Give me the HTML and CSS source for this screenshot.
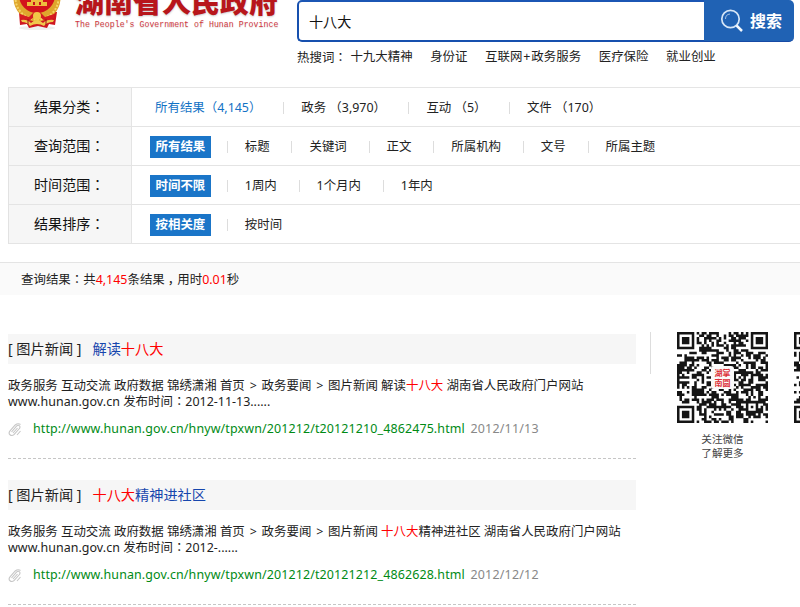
FILE: index.html
```html
<!DOCTYPE html>
<html lang="zh-CN">
<head>
<meta charset="utf-8">
<title>湖南省人民政府 - 搜索</title>
<link rel="stylesheet" href="styles.css">
</head>
<body>
<header class="top">
  <svg class="emblem" viewBox="0 2 52 34" width="52" height="34">
    <ellipse cx="26" cy="30" rx="18" ry="2" fill="#eee"/>
    <path d="M8 14L9 27L16 26L18 30L27 28L36 30L38 26L44 27L46 14Z" fill="#cf1620"/>
    <circle cx="26" cy="0" r="23.500" fill="#dfa62d"/>
    <circle cx="26" cy="0" r="21.500" fill="none" stroke="#f5d568" stroke-width="2" stroke-dasharray="2 1.500"/>
    <circle cx="26" cy="-3" r="18" fill="#d3121c"/>
    <path d="M20 0H32V4H36V8H16V4H20Z" fill="#eebc3d"/>
    <path d="M22 4H24V7H22ZM28 4H30V7H28Z" fill="#c8131b"/>
    <path d="M9 16L18 19L22 15H30L34 19L43 16L43 20L34 23L29 19H23L18 23L9 20Z" fill="#d51b22"/>
    <path d="M10 22Q16 21 20 25Q26 19 32 25Q36 21 43 22L42 24Q36 24 33 28Q26 24 19 28Q16 24 11 24Z" fill="#f0c64d"/>
    <circle cx="26" cy="18" r="4" fill="#f2c747"/>
    <path d="M17 21V27M35 21V27" stroke="#9f1116" stroke-width="1"/>
  </svg>
  <div class="brand">
    <div class="brand-cn">湖南省人民政府</div>
    <div class="brand-en">The People's Government of Hunan Province</div>
  </div>
  <div class="search">
    <div class="search-row">
      <div class="field">十八大</div>
      <div class="button">
        <svg width="24" height="24" viewBox="0 0 24 24" fill="none" stroke="#d6e6f7"><circle cx="10.500" cy="10" r="8.700" stroke-width="1.700"/><path d="M5.500 10A5 5 0 0 1 10 5" stroke-width="1" opacity=".7"/><path d="M16.500 16.500L22 22" stroke-width="2.500" stroke="#f2f7fd"/></svg>
        <b>搜索</b>
      </div>
    </div>
    <div class="hot"><span class="hot-label">热搜词<i lang="zh-Hant">：</i></span><span>十九大精神</span><span>身份证</span><span>互联网<span class="plus">+</span>政务服务</span><span>医疗保险</span><span>就业创业</span></div>
  </div>
</header>

<section class="filters">
  <div class="row first"><div class="label">结果分类<i lang="zh-Hant">：</i></div><div class="opts"><span class="current">所有结果（4,145）</span><span>政务 （3,970）</span><span>互动 （5）</span><span>文件 （170）</span></div></div>
  <div class="row"><div class="label">查询范围<i lang="zh-Hant">：</i></div><div class="opts"><b>所有结果</b><span>标题</span><span>关键词</span><span>正文</span><span>所属机构</span><span>文号</span><span>所属主题</span></div></div>
  <div class="row"><div class="label">时间范围<i lang="zh-Hant">：</i></div><div class="opts"><b>时间不限</b><span>1周内</span><span>1个月内</span><span>1年内</span></div></div>
  <div class="row"><div class="label">结果排序<i lang="zh-Hant">：</i></div><div class="opts"><b>按相关度</b><span>按时间</span></div></div>
</section>

<div class="summary">查询结果<i lang="zh-Hant">：</i>共<em>4,145</em>条结果<span class="comma">，</span>用时<em>0.01</em>秒</div>

<div class="main">
  <main class="results">
    <article>
      <h2><span class="cat">[ 图片新闻 ]</span><a>解读<em>十八大</em></a></h2>
      <p>政务服务 互动交流 政府数据 锦绣潇湘 首页 <span class="gt">&gt;</span> 政务要闻 <span class="gt">&gt;</span> 图片新闻 解读<em>十八大</em> 湖南省人民政府门户网站<br><span class="lat">www.hunan.gov.cn</span> 发布时间<i lang="zh-Hant">：</i>2012-11-13......</p>
      <div class="link">
        <svg class="clip" width="15" height="14" viewBox="0 0 15 14"><path d="M3.500 9L8.500 3.200Q10.300 1.500 11.500 2.800Q12.700 4 11 6L6.200 11.400Q4 13.400 2 11.800Q.2 10 2 7.800L7.200 2Q10 -.3 12.500 1.500M5 10L9.500 5M9 12L12.500 8"/></svg>
        <span class="url">http://www.hunan.gov.cn/hnyw/tpxwn/201212/t20121210_4862475.html</span><time>2012/11/13</time>
      </div>
    </article>
    <article>
      <h2><span class="cat">[ 图片新闻 ]</span><a><em>十八大</em>精神进社区</a></h2>
      <p>政务服务 互动交流 政府数据 锦绣潇湘 首页 <span class="gt">&gt;</span> 政务要闻 <span class="gt">&gt;</span> 图片新闻 <em>十八大</em>精神进社区 湖南省人民政府门户网站<br><span class="lat">www.hunan.gov.cn</span> 发布时间<i lang="zh-Hant">：</i>2012-......</p>
      <div class="link">
        <svg class="clip" width="15" height="14" viewBox="0 0 15 14"><path d="M3.500 9L8.500 3.200Q10.300 1.500 11.500 2.800Q12.700 4 11 6L6.200 11.400Q4 13.400 2 11.800Q.2 10 2 7.800L7.200 2Q10 -.3 12.500 1.500M5 10L9.500 5M9 12L12.500 8"/></svg>
        <span class="url">http://www.hunan.gov.cn/hnyw/tpxwn/201212/t20121212_4862628.html</span><time>2012/12/12</time>
      </div>
    </article>
  </main>
  <div class="rule"></div>
  <aside class="codes">
    <figure>
      <div class="qr"><svg data-seed="7" viewBox="0 0 37 37" width="91" height="91"></svg><div class="seal"><span>湖掌</span><span>南圆</span></div></div>
      <figcaption>关注微信<br>了解更多</figcaption>
    </figure>
    <figure><div class="qr"><svg data-seed="23" viewBox="0 0 37 37" width="91" height="91"></svg></div></figure>
  </aside>
</div>
<script src="qr.js"></script>
</body>
</html>
```
FILE: styles.css
```css
* { box-sizing: border-box; }
body { margin: 0; width: 800px; height: 607px; overflow: hidden; background: #fff; color: #222; font: 12.45px/16px "Noto Sans", "Noto Sans CJK SC", sans-serif; white-space: nowrap; }
i { font-style: normal; font-family: "Noto Sans CJK TC", sans-serif; }
em { font-style: normal; color: #f00; }

.top { display: flex; height: 87px; overflow: hidden; }
.emblem { flex: none; margin-left: 11px; }
.brand { width: 234px; padding-left: 12px; color: #b8161b; }
.brand-cn { margin-top: -16px; font: 900 29px/32px "Noto Sans CJK SC", sans-serif; text-shadow: 0 1px 2px #ccc; }
.brand-en { margin-top: 4px; font: 8.270px/10px "Liberation Mono", monospace; color: #d0383e; text-shadow: 0 1px 1px #ddd; }
.search { width: 497px; }
.search-row { display: flex; height: 42px; }
.field { flex: 1; padding: 0 10px; border: 2px solid #1750ae; border-top-color: #1b56b4; border-right: 0; border-radius: 5px 0 0 5px; font-size: 14.100px; line-height: 40px; color: #111; }
.button { display: flex; align-items: center; width: 90px; padding-left: 16px; gap: 6px; border-radius: 0 5px 5px 0; background: #2062b4; border-bottom: 1px solid #164aa5; color: #fff; font-size: 16px; }
.hot { display: flex; gap: 17.600px; margin-top: 7px; }
.hot-label { margin-right: -14px; }
.plus { padding: 0 .9px; }

.filters { margin-left: 8px; border-left: 1px solid #e2e2e2; border-top: 1px solid #e5e5e5; }
.row { display: flex; height: 39px; border-bottom: 1px solid #e4e4e4; }
.label { width: 123px; padding-left: 25px; border-right: 1px solid #e4e4e4; background: #f6f6f6; font-size: 14.100px; line-height: 37px; color: #111; }
.opts { display: flex; align-items: center; padding: 2px 0 0 17.500px; }
.opts span { padding-left: 18px; margin-right: 21.800px; line-height: 20px; }
.opts span + span, .opts b + span { position: relative; }
.opts span + span::before, .opts b + span::before { content: ""; position: absolute; left: 0; top: 4px; width: 1px; height: 12px; background: #ddd; }
.opts b { height: 22px; margin: -1px 15.500px 0 0; padding: 0 6px; background: #1a75c8; color: #fff; line-height: 22px; }
.opts .current { padding-left: 5.500px; color: #1272c5; }
.first .opts span + span { margin-right: 22.400px; }

.summary { height: 33px; margin-top: 18px; padding-left: 21px; border-top: 1px solid #e4e4e4; background: #fafafa; line-height: 32px; }
.comma { display: inline-block; width: 12.450px; text-indent: 3px; }

.main { display: flex; padding: 39px 0 0 8px; }
.results { width: 628px; flex: none; }
article { height: 125px; margin-bottom: 21px; border-bottom: 1px dashed #c6c6c6; }
h2 { display: flex; gap: 11px; height: 30px; margin: 0; background: #f6f6f6; font-weight: 400; font-size: 14.200px; line-height: 30px; }
h2 a { color: #1646ad; }
p { margin: 14px 0 0; line-height: 15.500px; }
.gt { padding: 0 1.600px; }
.lat { letter-spacing: .06px; }
.link { display: flex; align-items: center; height: 18px; margin-top: 11px; }
.clip { fill: none; stroke: #c6c6c6; stroke-width: 1.100; margin: 2px 10px 0 0; }
.url { color: #008a15; letter-spacing: .13px; }
time { margin-left: 5.500px; color: #888; letter-spacing: .22px; }

.rule { flex: none; width: 1px; height: 42px; margin: -2px 26px 0 14px; background: #ddd; }
.codes { display: flex; flex: 1; min-width: 0; overflow: hidden; gap: 26px; margin-top: -2px; }
figure { width: 91px; margin: 0; flex: none; text-align: center; }
.qr { position: relative; height: 91px; }
.qr svg { display: block; }
.seal { position: absolute; left: 34px; top: 34px; width: 23px; height: 23px; padding-top: 2px; border-radius: 3px; background: #fafafa; color: #dc3038; font: 700 8px/9.500px "Noto Sans CJK SC", sans-serif; }
.seal span { display: block; }
figcaption { margin-top: 9px; font-size: 10.600px; line-height: 14px; color: #444; }
```
FILE: qr.js
```js
// Draws a 37-module code into each svg: three finders, one alignment mark, seeded data cells.
document.querySelectorAll('svg[data-seed]').forEach(function (svg) {
  var s = +svg.dataset.seed, N = 37, d = '';
  function rnd() { s = (s * 1103515245 + 12345) % 2147483648; return s / 2147483648; }
  function ring(x, y, cx, cy) { return Math.max(Math.abs(x - cx), Math.abs(y - cy)); }
  for (var y = 0; y < N; y++) for (var x = 0; x < N; x++) {
    var on = rnd() < 0.53;
    [[3, 3], [33, 3], [3, 33]].forEach(function (c) {
      var r = ring(x, y, c[0], c[1]);
      if (r <= 4) on = r < 2 || r === 3;
    });
    var a = ring(x, y, 30, 30);
    if (a <= 2) on = a !== 1;
    if (on) d += 'M' + x + ' ' + y + 'h1.03v1.03h-1.03z';
  }
  var p = document.createElementNS('http://www.w3.org/2000/svg', 'path');
  p.setAttribute('d', d);
  p.setAttribute('fill', '#151515');
  svg.appendChild(p);
});
```
